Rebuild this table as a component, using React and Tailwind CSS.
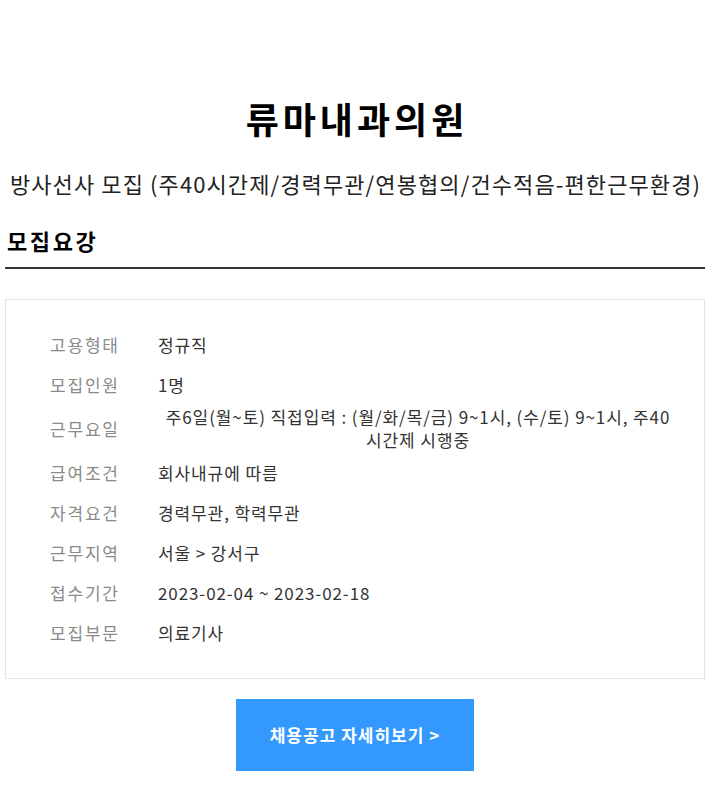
const rows = [
  { label: '고용형태', value: '정규직' },
  { label: '모집인원', value: '1명' },
  {
    label: '근무요일',
    value: '주6일(월~토) 직접입력 : (월/화/목/금) 9~1시, (수/토) 9~1시, 주40 시간제 시행중',
    center: true,
  },
  { label: '급여조건', value: '회사내규에 따름' },
  { label: '자격요건', value: '경력무관, 학력무관' },
  { label: '근무지역', value: '서울 > 강서구' },
  { label: '접수기간', value: '2023-02-04 ~ 2023-02-18' },
  { label: '모집부문', value: '의료기사' },
];

const font = { fontFamily: '"Noto Sans CJK KR", "Noto Sans", sans-serif' };

const App = () => {
  return (
    <div className="min-h-[787px] bg-white px-[5px] pt-[96px] text-[#111]" style={font}>
      <h1 className="pl-[4px] text-center text-[36px] font-bold leading-[44px] tracking-[4px] text-black">
        류마내과의원
      </h1>
      <p className="mt-[28px] pl-[1px] text-center text-[22px] leading-[30px] tracking-[1.1px] text-[#222]">
        방사선사 모집 (주40시간제/경력무관/연봉협의/건수적음-편한근무환경)
      </p>

      <h2 className="mt-[28px] border-b-2 border-[#333] pb-[13px] pl-[2px] text-[22px] font-bold leading-[28px] tracking-[2.6px] text-black">
        모집요강
      </h2>

      <div className="mt-[30px] border border-[#e3e3e3] pb-[26px] pl-[44px] pr-[26px] pt-[24px]">
        {rows.map((row) => (
          <div key={row.label} className="flex min-h-[40px] items-center py-[1px]">
            <div className="w-[108px] shrink-0 text-[17px] leading-[23px] tracking-[1.8px] text-[#8a8a8a]">
              {row.label}
            </div>
            <div
              className={
                'flex-1 text-[17px] leading-[23px] tracking-[0.9px] text-[#333] ' +
                (row.center ? 'text-center' : '')
              }
            >
              {row.value}
            </div>
          </div>
        ))}
      </div>

      <div className="mt-[20px] flex justify-center">
        <button className="h-[72px] w-[238px] bg-[#3399ff] text-[17px] font-bold tracking-[1px] text-white">
          채용공고 자세히보기 &gt;
        </button>
      </div>
    </div>
  );
};

export default App;
